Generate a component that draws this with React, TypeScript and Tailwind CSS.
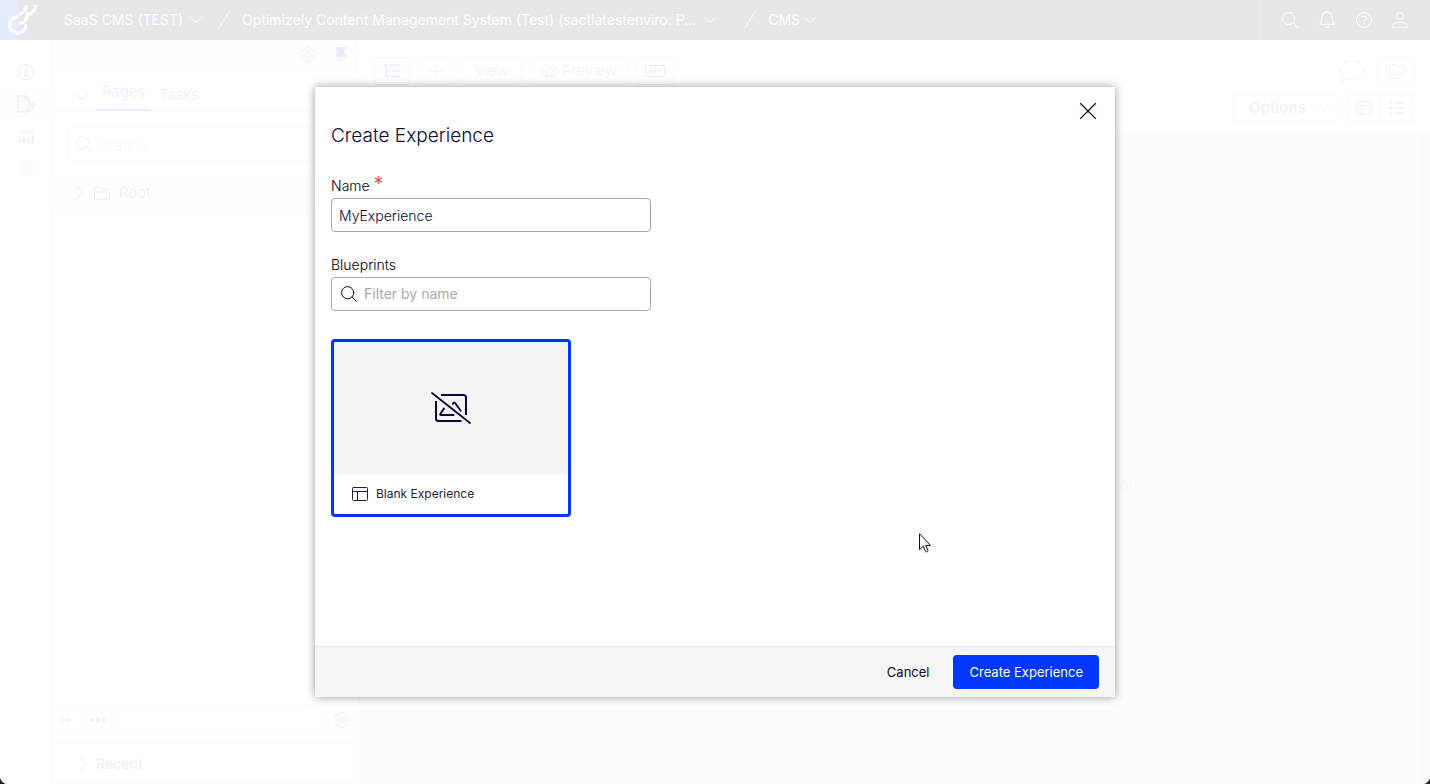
import React, { useState } from "react";

type IconProps = { className?: string; size?: number; children?: React.ReactNode };

function Icon({ className = "", size = 16, children }: IconProps) {
  return (
    <svg
      aria-hidden="true"
      width={size}
      height={size}
      viewBox="0 0 16 16"
      fill="none"
      stroke="currentColor"
      strokeWidth="1"
      strokeLinecap="round"
      strokeLinejoin="round"
      className={`shrink-0 ${className}`}
    >
      {children}
    </svg>
  );
}

const SearchIcon = ({ className }: IconProps) => (
  <Icon className={className}>
    <circle cx="6.7" cy="6.7" r="6.1" />
    <path d="M11.2 11.2 15.5 15.5" />
  </Icon>
);

const GearIcon = ({ className }: IconProps) => (
  <Icon className={className}>
    <circle cx="8" cy="8" r="2.6" />
    <path d="M6.7.6h2.6l.6 2.1 1.6.9 2.1-.6 1.3 2.2-1.500 1.600v2.400l1.500 1.600-1.300 2.200-2.100-.6-1.600.9-.6 2.100H6.700l-.6-2.100-1.600-.9-2.100.6-1.300-2.200L2.600 9.200V6.800L1.100 5.200 2.400 3l2.100.6 1.600-.9z" />
  </Icon>
);

const ChevronDown = ({ className, size = 12 }: IconProps) => (
  <Icon className={className} size={size}>
    <path d="M1 4.500 8 11.500 15 4.500" strokeWidth="1.3" />
  </Icon>
);

const ChevronRight = ({ className }: IconProps) => (
  <Icon className={className} size={14}>
    <path d="M5 1 12 8 5 15" />
  </Icon>
);

const PlusIcon = ({ className }: IconProps) => (
  <Icon className={className} size={14}>
    <path d="M8 1v14M1 8h14" />
  </Icon>
);

const LayoutIcon = ({ className }: IconProps) => (
  <Icon className={className}>
    <rect x=".5" y="1.500" width="15" height="13" rx="1" />
    <path d="M.5 5.500h15M5.500 5.500v9" />
  </Icon>
);

function Logo() {
  return (
    <svg aria-hidden="true" viewBox="0 0 40 40" className="size-10 shrink-0" fill="none" stroke="#fff" strokeWidth="3.200">
      <path d="M0 0h18v40H0z" fill="#0037ff" stroke="none" />
      <path d="M26.500 5c-.6 5.300-3 8.200-8 9.300M36.200 5c-.8 5.300-3.300 8.300-8.700 9.300-.6 5.400-3.400 8.700-8.800 9.400" />
      <path d="M18.800 16.800A8.200 8.200 0 1 0 26 24.500" />
    </svg>
  );
}

function Slash() {
  return (
    <svg aria-hidden="true" viewBox="0 0 12 18" className="h-[18px] w-3" stroke="#fff" fill="none">
      <path d="M1 17 11 1" />
    </svg>
  );
}

function Header() {
  return (
    <header className="flex h-10 shrink-0 items-center bg-[#080736] text-sm leading-5 text-white">
      <Logo />
      <nav aria-label="Breadcrumb" className="flex min-w-0 flex-1 items-center pl-6">
        <button className="flex items-center gap-[7px] whitespace-nowrap">
          SaaS CMS (TEST) <ChevronDown />
        </button>
        <span className="ml-4 mr-3"><Slash /></span>
        <button className="flex min-w-0 items-center gap-2">
          <span className="truncate">Optimizely Content Management System (Test) (sactlatestenviro: P...</span>
          <ChevronDown />
        </button>
        <span className="ml-7 mr-3"><Slash /></span>
        <button className="flex items-center gap-1">
          CMS <ChevronDown />
        </button>
      </nav>
      <div className="flex h-full items-center gap-5 border-l border-[#39385e] pl-[22px] pr-[22px]">
        <button aria-label="Search"><SearchIcon /></button>
        <button aria-label="Notifications">
          <Icon size={18}>
            <path d="M8 .8a4.600 4.600 0 0 1 4.600 4.600c0 4.200 1.600 5.800 2 6.400H1.400c.4-.6 2-2.200 2-6.400A4.600 4.600 0 0 1 8 .8zM6.300 13.800c.6 1.300 2.800 1.300 3.400 0" />
          </Icon>
        </button>
        <button aria-label="Help">
          <Icon>
            <circle cx="8" cy="8" r="7.500" />
            <path d="M5.700 5V4.500h4.800v3L8 8.400V10M8 11.800v.3" />
          </Icon>
        </button>
        <button aria-label="Account">
          <Icon>
            <circle cx="8" cy="4" r="3.500" />
            <path d="M1 15.500v-1.500c0-2.200 2.600-3.800 7-3.800s7 1.600 7 3.800v1.500z" />
          </Icon>
        </button>
      </div>
    </header>
  );
}

function Rail() {
  return (
    <nav aria-label="Main" className="flex w-[52px] shrink-0 flex-col border-r border-[#e1e1e6] pt-4 text-[#302f58]">
      <a href="#dashboard" aria-label="Dashboard" className="flex h-8 items-center justify-center">
        <Icon>
          <circle cx="8" cy="8" r="7.500" />
          <circle cx="8" cy="11" r="1.500" />
          <path d="M8 9.500V4M3.500 8H4M12 8h.5M4.800 4.800l.3.300M11.200 4.800l-.3.300" />
        </Icon>
      </a>
      <a href="#edit" aria-label="Edit" className="flex h-8 items-center justify-center bg-[#f0f0f6]">
        <Icon size={18}>
          <path d="M8 15H.8V.8h6.600l3.400 3.400v4M7.300.8v3.500h3.500M8.800 14.900l.6-2.700 4.500-4.500c.9-.9 2.600.7 1.700 1.700L11.200 14z" />
        </Icon>
      </a>
      <a href="#reports" aria-label="Reports" className="flex h-8 items-center justify-center">
        <Icon>
          <path d="M.5 6.500 5 2l3.500 3.500 7-5" />
          <path d="M2 15v-4M6 15V9.500M10.500 15v-4.500M14.500 15V7.500" strokeWidth="2" strokeLinecap="butt" />
        </Icon>
      </a>
      <a href="#settings" aria-label="Settings" className="flex h-8 items-center justify-center text-[#8c8ca0]">
        <GearIcon />
      </a>
    </nav>
  );
}

function Sidebar() {
  return (
    <aside className="flex w-[306px] shrink-0 flex-col border-r border-[#e1e1e1] text-[#4b4a60]">
      <div className="flex h-[31px] justify-end border-b border-[#e1e1e1] bg-[#f8f8f8]">
        <button aria-label="Panel settings" className="flex w-[33px] items-center justify-center border-l border-[#e1e1e1]"><GearIcon /></button>
        <button aria-label="Pin panel" className="flex w-[33px] items-center justify-center border-l border-[#e1e1e1] text-[#0037ff]">
          <svg aria-hidden="true" viewBox="0 0 12 16" className="h-4 w-3" fill="currentColor">
            <path d="M1 0h10v2.500H9.500L10 7c1.500.6 2 1.600 2 3H0c0-1.400.5-2.400 2-3l.5-4.500H1zM5.300 11h1.400v3l-.7 2-.7-2z" />
          </svg>
        </button>
      </div>
      <div className="flex h-[41px] items-end border-b border-[#e1e1e1] pl-[23px] text-[15px] font-light leading-5">
        <button aria-label="Collapse" className="mb-2"><ChevronDown size={14} /></button>
        <button className="ml-[7px] h-8 border-b-2 border-[#0037ff] px-[6px] pb-1 text-[#0037ff]">Pages</button>
        <button className="mb-[6px] ml-2">Tasks</button>
      </div>
      <label className="mx-4 mt-[15px] flex h-[34px] items-center gap-[2px] rounded border border-[#e1e1e1] px-[7px]">
        <SearchIcon />
        <input aria-label="Search pages" type="search" placeholder="Search" className="h-full w-full min-w-0 pt-[2px] text-base font-light outline-none placeholder:text-[#b5b5b5]" />
      </label>
      <div className="mt-4 flex h-8 items-center bg-[#ececec] pl-5 text-[15px] font-light">
        <ChevronRight />
        <Icon className="ml-2">
          <path d="M.5 13V3.200C.5 2.500 1 2 1.700 2h3.600l1.600 2h7.400c.7 0 1.200.5 1.200 1.200V13c0 .7-.5 1.200-1.200 1.200H1.700C1 14.200.5 13.700.5 13zM3 7h10" />
        </Icon>
        <span className="ml-[9px]">Root</span>
      </div>
      <div className="flex-1" />
      <div className="flex h-[30px] border-y border-[#e1e1e1]">
        <button aria-label="Add" className="flex w-[31px] items-center justify-center border-r border-[#e1e1e1]"><PlusIcon /></button>
        <button aria-label="More" className="flex w-[31px] items-center justify-center border-r border-[#e1e1e1]">
          <Icon>
            <path d="M2 8h.01M8 8h.01M14 8h.01" strokeWidth="4" />
          </Icon>
        </button>
        <button aria-label="Options" className="ml-auto flex w-[31px] items-center justify-center border-l border-[#e1e1e1]"><GearIcon /></button>
      </div>
      <button className="mt-2 flex h-[41px] items-center gap-[6px] border-y border-[#e1e1e1] pl-6 pt-px text-left text-sm font-medium">
        <ChevronRight /> Recent
      </button>
    </aside>
  );
}

function Workspace() {
  return (
    <main className="flex min-w-0 flex-1 flex-col text-sm text-[#65657a]">
      <div className="flex items-start justify-between px-4 pt-[17px]">
        <div className="flex gap-2">
          <button aria-label="Structure" className="flex h-7 w-9 items-center justify-center rounded border border-[#a8a8b4] bg-[#f6f6fb] text-[#0037ff]">
            <Icon>
              <path d="M0 2h3M5 2h11M2 2v11.500h3M2 8h3M7 8h9M7 13.500h9" strokeWidth="1.500" strokeLinecap="butt" />
            </Icon>
          </button>
          <button aria-label="Add block" className="flex h-7 w-9 items-center justify-center rounded border border-[#d0d0d6]"><PlusIcon /></button>
          <button className="flex h-7 w-[59px] items-center justify-center rounded border border-[#d0d0d6] text-[15px] font-light">View</button>
          <button className="flex h-7 w-[99px] items-center justify-center gap-1 rounded border border-[#d0d0d6] text-[15px] font-light">
            <Icon size={18}>
              <path d="M.5 8C4 1.200 12 1.200 15.500 8 12 14.800 4 14.800.5 8z" />
              <circle cx="8" cy="8" r="3.200" />
            </Icon>
            Preview
          </button>
          <button aria-label="Compare" className="flex h-7 w-[38px] items-center justify-center rounded border border-[#c0c0c8] text-[#302f58]">
            <svg aria-hidden="true" viewBox="0 0 20 12" className="h-3 w-5" fill="none" stroke="currentColor">
              <rect x=".5" y=".5" width="19" height="11" rx="1" />
              <path d="M10 2v8M5 6h3M12 6h3M6.500 4.500 5 6l1.500 1.500M13.500 4.500 15 6l-1.500 1.500" />
            </svg>
          </button>
        </div>
        <div className="flex items-center gap-[14px]">
          <button aria-label="Comments">
            <svg aria-hidden="true" viewBox="0 0 24 22" className="h-[22px] w-6" fill="none" stroke="currentColor" strokeLinejoin="round">
              <path d="M12 .5c6.500 0 11.500 4 11.500 9.300S18.500 19 12 19c-1.700 0-3.300-.2-4.700-.8-1.600 1.600-3.800 2.500-6.300 2.800 1.300-1.200 2-2.800 2-4.600C1.300 14.700.5 12.500.5 9.800.5 4.500 5.500.5 12 .5z" />
            </svg>
          </button>
          <button aria-label="Assets" className="flex h-7 w-9 items-center justify-center rounded border border-[#a8a8b4]">
            <svg aria-hidden="true" viewBox="0 0 20 16" className="h-4 w-5" fill="none" stroke="currentColor" strokeLinejoin="round" strokeLinecap="round">
              <path d="M3.500 10.500v-8c0-.7.500-1.200 1.200-1.200h4.100l1.700 2h7.300c.7 0 1.200.5 1.200 1.200v6c0 .7-.5 1.200-1.200 1.200H4.700c-.7 0-1.200-.5-1.200-1.200zM.8 5.500v8c0 1 .7 1.800 1.800 1.800H13" />
            </svg>
          </button>
        </div>
      </div>
      <div className="flex justify-end gap-2 px-4 pb-[13px] pt-[9px]">
        <button className="flex h-7 w-[107px] items-center justify-between rounded border border-[#c8c8d0] pl-4 pr-2 text-[15px] font-semibold">
          Options <ChevronDown />
        </button>
        <div className="flex h-7 overflow-hidden rounded border border-[#c8c8d0]">
          <button aria-label="Layout view" className="flex w-[33px] items-center justify-center border-r border-[#c8c8d0] bg-[#eef1ff] text-[#5a6cff]"><LayoutIcon /></button>
          <button aria-label="List view" className="flex w-8 items-center justify-center">
            <Icon>
              <path d="M5.500 3h10M5.500 8h10M5.500 13h10" strokeWidth="1.500" strokeLinecap="butt" />
              <path d="M.5 2h2v2h-2zM.5 7h2v2h-2zM.5 12h2v2h-2z" />
            </Icon>
          </button>
        </div>
      </div>
      <div className="flex flex-1 bg-linear-to-br from-[#e6e6e6] via-[#e2e2dc] to-[#d8d8d2]">
        <p className="flex-1 self-center pt-[50px] text-right font-light text-[#a0a0a0]">
          <span className="mr-[287px]">not</span>
        </p>
        <div className="w-[10px] bg-[#cdcdca]" />
      </div>
    </main>
  );
}

function CreateDialog() {
  const [name, setName] = useState("MyExperience");
  const [filter, setFilter] = useState("");
  return (
    <section
      role="dialog"
      aria-modal="true"
      aria-labelledby="dialog-title"
      className="relative flex min-h-[610px] w-full max-w-[800px] flex-col bg-white text-[#080736] shadow-[0_0_9px_rgba(0,0,0,0.4)]"
    >
      <button aria-label="Close" className="absolute right-[19px] top-4">
        <Icon>
          <path d="M.5.5l15 15M15.500.5l-15 15" strokeWidth="1.200" />
        </Icon>
      </button>
      <div className="flex-1 px-4 pt-9">
        <h1 id="dialog-title" className="text-[19px] font-light leading-[26px]">Create Experience</h1>
        <form className="mt-[25px] flex max-w-[320px] flex-col text-sm leading-5">
          <label htmlFor="name" className="font-light text-black">
            Name <span className="text-xl leading-5 text-[#f03e3e]">*</span>
          </label>
          <input
            id="name"
            value={name}
            onChange={(e) => setName(e.target.value)}
            className="mt-[2px] h-[34px] rounded border border-[#a5a5ad] px-[7px] font-light outline-none"
          />
          <label htmlFor="filter" className="mt-[23px] font-light text-black">Blueprints</label>
          <div className="mt-[2px] flex h-[34px] items-center gap-[7px] rounded border border-[#a5a5ad] px-2">
            <SearchIcon className="ml-px" />
            <input
              id="filter"
              value={filter}
              onChange={(e) => setFilter(e.target.value)}
              placeholder="Filter by name"
              className="w-full min-w-0 outline-none placeholder:text-[#a9a9a9]"
            />
          </div>
        </form>
        <button className="mt-7 flex w-60 flex-col overflow-hidden rounded border-[3px] border-[#0037ff] text-left">
          <span className="flex h-[132px] w-full items-center justify-center bg-[#f4f4f4]">
            <svg aria-hidden="true" viewBox="0 0 40 32" className="h-8 w-10" fill="none" stroke="currentColor" strokeWidth="2" strokeLinecap="round" strokeLinejoin="round">
              <path d="M1 1 39 31" strokeWidth="1.800" />
              <path d="M10 3h22.500c1.700 0 2.500 1 2.500 2.500V23" strokeLinecap="butt" />
              <path d="M5 9v17.500C5 28 6 29 7.500 29H30.500" strokeLinecap="butt" />
              <path d="M13 16.500 9.300 22q-.5 1 .7 1h12.500" />
              <path d="M21.800 12c.9-2 1.800-2 2.700-.4l5.200 7.200" strokeWidth="1.800" />
            </svg>
          </span>
          <span className="flex h-10 items-center gap-2 px-[18px] text-xs text-[#22213f]">
            <LayoutIcon /> Blank Experience
          </span>
        </button>
      </div>
      <footer className="flex items-center justify-end gap-2 border-t border-[#ebebeb] bg-[#f6f6f6] px-4 py-2 text-[13px] leading-5">
        <button className="h-[34px] px-4">Cancel</button>
        <button className="h-[34px] rounded bg-[#0037ff] px-4 text-white">Create Experience</button>
      </footer>
    </section>
  );
}

export default function App() {
  return (
    <div className="bg-[#1c1c1c] font-['Inter',sans-serif]">
      <div className="relative flex min-h-screen flex-col overflow-hidden rounded-b-lg bg-white">
        <Header />
        <div className="flex flex-1">
          <Rail />
          <Sidebar />
          <Workspace />
        </div>
        <div className="absolute inset-0 flex items-center justify-center bg-white/90">
          <CreateDialog />
        </div>
        <svg aria-hidden="true" viewBox="0 0 12 20" className="pointer-events-none absolute left-[919px] top-[533px] h-5 w-3" fill="#fff" stroke="#111" strokeWidth="1">
          <path d="M.5.700v16l3.700-3.500 2.500 5.500c.8.600 2.300 0 2.300-1L6.800 12.400h4.700z" />
        </svg>
      </div>
    </div>
  );
}
